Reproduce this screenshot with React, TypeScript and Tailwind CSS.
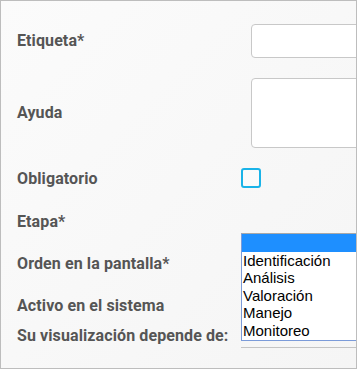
import React from "react";

const labelCls =
  "w-[224px] shrink-0 text-[16px] font-bold tracking-[0.1px] text-[#555555] font-['Roboto',Arial,sans-serif]";

const options = ["Identificación", "Análisis", "Valoración", "Manejo", "Monitoreo"];

export default function App() {
  return (
    <div className="relative w-[357px] h-[369px] overflow-hidden border border-[#bdbdbd] bg-gradient-to-br from-[#fbfbfb] to-[#f5f5f5] pl-4 pt-[23px]">
      {/* Etiqueta */}
      <div className="flex h-[34px] items-center">
        <span className={labelCls}>Etiqueta*</span>
        <input
          type="text"
          className="ml-[10px] h-full w-[130px] shrink-0 rounded-[4px] border border-[#c8c8c8] bg-white"
        />
      </div>

      {/* Ayuda */}
      <div className="mt-[20px] flex h-[70px] items-center">
        <span className={labelCls}>Ayuda</span>
        <textarea className="ml-[10px] h-full w-[130px] shrink-0 resize-none rounded-[4px] border border-[#c8c8c8] bg-white" />
      </div>

      {/* Obligatorio */}
      <div className="mt-[20px] flex h-[22px] items-center">
        <span className={labelCls}>Obligatorio</span>
        <span className="h-[20px] w-[20px] self-start rounded-[3px] border-2 border-[#1ab3e8] bg-white/40" />
      </div>

      {/* Etapa */}
      <div className="mt-[15px] flex h-[34px] items-center">
        <span className={labelCls}>Etapa*</span>
      </div>

      {/* Orden */}
      <div className="mt-[8px] flex h-[34px] items-center">
        <span className={labelCls}>Orden en la pantalla*</span>
      </div>

      {/* Activo */}
      <div className="mt-[8px] flex h-[34px] items-center">
        <span className={labelCls}>Activo en el sistema</span>
      </div>

      {/* Su visualización */}
      <div className="flex h-[26px] items-center">
        <span className={labelCls}>Su visualización depende de:</span>
        <div className="h-[2px] w-[130px] self-end border-t border-[#c4c4c4]" />
      </div>

      {/* open dropdown list for Etapa */}
      <div className="absolute left-[240px] top-[232px] w-[130px] border-t border-l border-b border-t-[#a8a8a8] border-l-[#7b9bd9] border-b-[#7b9bd9] bg-white font-['Liberation_Sans',Arial,sans-serif] text-[15px] text-black">
        <div className="h-[17.6px] bg-[#1e8fff]" />
        {options.map((o) => (
          <div key={o} className="h-[17.6px] pl-[1px] leading-[17.6px]">
            {o}
          </div>
        ))}
      </div>
    </div>
  );
}
